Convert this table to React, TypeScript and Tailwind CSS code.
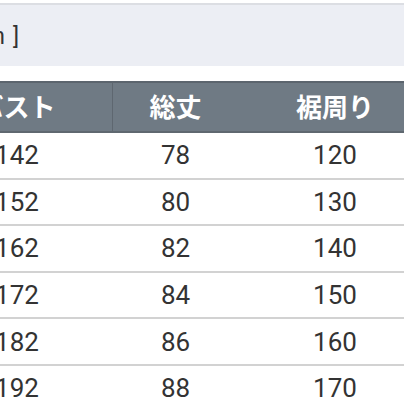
import React from "react";

const rows = [
  ["142", "78", "120"],
  ["152", "80", "130"],
  ["162", "82", "140"],
  ["172", "84", "150"],
  ["182", "86", "160"],
  ["192", "88", "170"],
];

export default function App() {
  return (
    <div
      className="w-[404px] h-[404px] overflow-hidden bg-white relative"
      style={{ fontFamily: 'Roboto, "Noto Sans CJK JP", sans-serif' }}
    >
      <div className="h-[3px]" />
      <div className="h-[2px] bg-[#dcdee3]" />
      <div className="h-[61px] bg-[#eceef4] flex items-center">
        <div className="w-[19px] flex justify-end whitespace-nowrap text-[23px] text-[#333] leading-none pt-[2px]">
          <span className="mr-[1px]">[ cm</span>
          <span className="ml-[7px]">]</span>
        </div>
      </div>
      <div className="h-[15px]" />
      <div className="ml-[-79px] w-[503px]">
        <div className="flex h-[52px] bg-[#6f7a84] border-t-2 border-b-2 border-t-[#5c656e] border-b-[#5f6870] text-white font-bold text-[26px] leading-none">
          <div className="w-[192px] flex items-center justify-center border-r border-[#5e6770] pt-[2px]">バスト</div>
          <div className="w-[133px] flex items-center justify-center pr-[8px] pt-[2px]">総丈</div>
          <div className="w-[178px] flex items-center justify-center pt-[2px]">
            <span className="block">裾周り</span>
          </div>
        </div>
        {rows.map((r, i) => (
          <div
            key={i}
            className="flex h-[46.6px] border-b-2 border-[#d2d2d2] text-[26px] text-[#333] leading-none"
          >
            <div className="w-[192px] flex items-center justify-center">{r[0]}</div>
            <div className="w-[133px] flex items-center justify-center pr-[8px]">{r[1]}</div>
            <div className="w-[178px] flex items-center justify-center">{r[2]}</div>
          </div>
        ))}
      </div>
    </div>
  );
}
